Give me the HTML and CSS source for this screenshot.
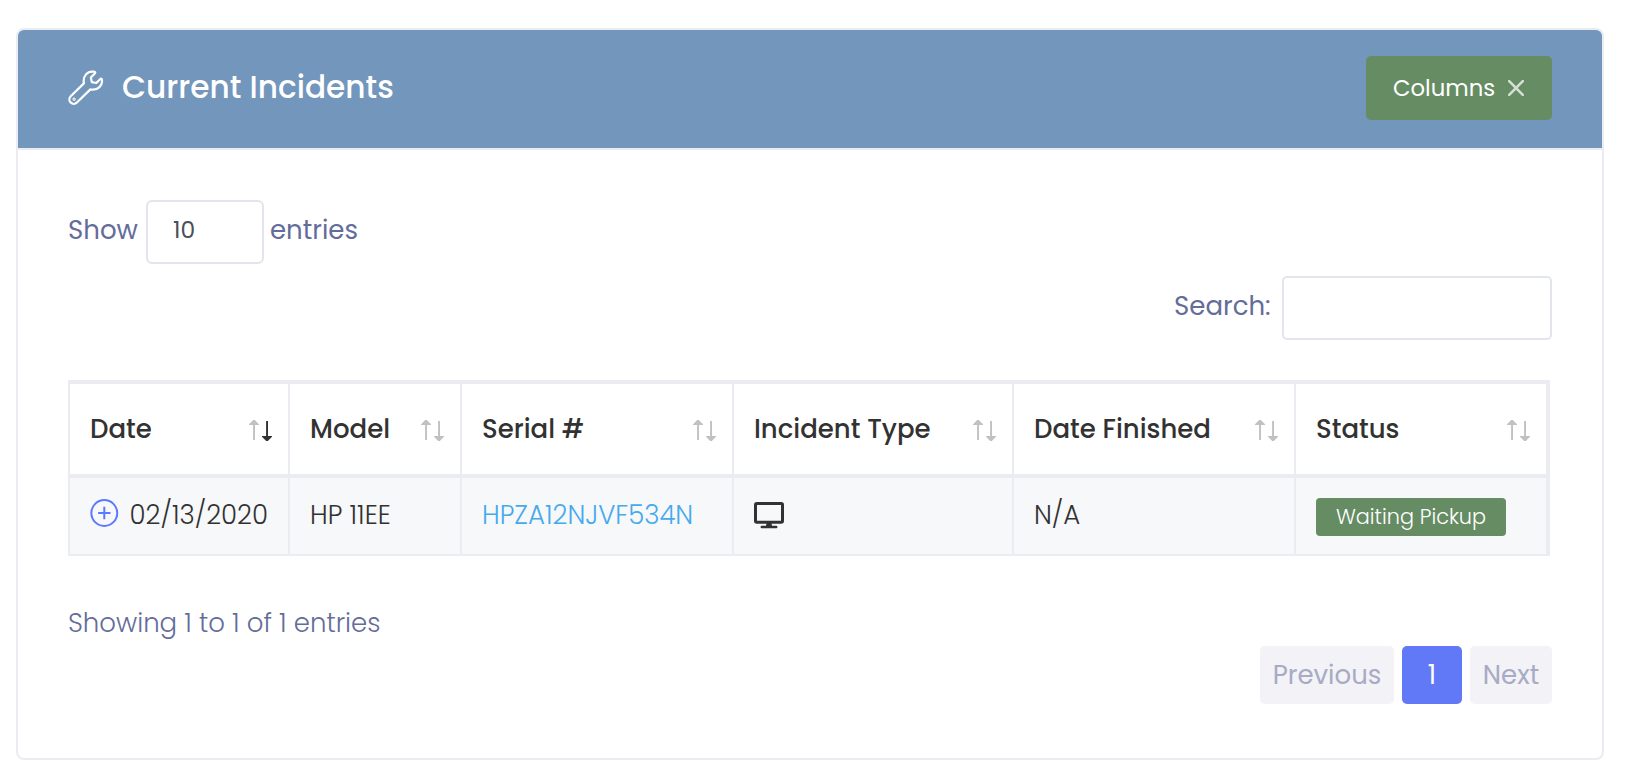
FILE: index.html
```html
<!DOCTYPE html>
<html lang="en">
<head>
<meta charset="utf-8">
<title>Current Incidents</title>
<link rel="stylesheet" href="styles.css">
</head>
<body>
<svg class="defs" aria-hidden="true">
  <symbol id="up" viewBox="0 0 10 20"><path d="M4.1 5H0v-.8L4.2 0h1.6L10 4.2V5H6v15H4.1z"/></symbol>
  <symbol id="down" viewBox="0 0 10 20"><path d="M4.1 0H6v15h4v.8L5.8 20H4.2L0 15.8V15h4.1z"/></symbol>
</svg>
<section class="card">
  <header class="card-header">
    <svg class="wrench" viewBox="0 0 36 36"><path d="M26 1.7C19.6 .6 14.5 6 15.9 13.4L2.7 26.3a4.35 4.35 0 0 0 6.2 6.2L22.4 19.4C29.9 20.9 35.2 15.2 33.8 9.2Q33.3 8 32.3 9L28.3 13L23.8 12.1L22.9 7.6L26.8 3.6Q28 2 26 1.7Z"/><circle cx="6.1" cy="29.2" r=".5"/></svg>
    <h1 class="title">Current Incidents</h1>
    <button class="columns-btn"><span>Columns</span><svg class="close" viewBox="0 0 16 16"><path d="M1.2 1.2l13.6 13.6M14.8 1.2L1.2 14.8"/></svg></button>
  </header>
  <div class="card-body">
    <div class="length"><span class="show">Show</span><span class="select">10</span><span>entries</span></div>
    <label class="search"><span class="search-label">Search:</span><input class="search-input" type="text"></label>
    <table class="incidents">
      <colgroup><col class="c-date"><col class="c-model"><col class="c-serial"><col class="c-type"><col class="c-finished"><col class="c-status"></colgroup>
      <thead><tr>
        <th><div class="head"><span>Date</span><span class="sort"><svg><use href="#up"/></svg><svg class="active"><use href="#down"/></svg></span></div></th>
        <th><div class="head"><span>Model</span><span class="sort"><svg><use href="#up"/></svg><svg><use href="#down"/></svg></span></div></th>
        <th><div class="head"><span>Serial #</span><span class="sort"><svg><use href="#up"/></svg><svg><use href="#down"/></svg></span></div></th>
        <th><div class="head"><span>Incident Type</span><span class="sort"><svg><use href="#up"/></svg><svg><use href="#down"/></svg></span></div></th>
        <th><div class="head"><span>Date Finished</span><span class="sort"><svg><use href="#up"/></svg><svg><use href="#down"/></svg></span></div></th>
        <th><div class="head"><span>Status</span><span class="sort"><svg><use href="#up"/></svg><svg><use href="#down"/></svg></span></div></th>
      </tr></thead>
      <tbody><tr>
        <td><div class="cell"><svg class="plus" viewBox="0 0 30 30"><circle cx="15" cy="15" r="13.6"/><path d="M8.5 15h13M15 8.5v13"/></svg><span>02/13/2020</span></div></td>
        <td><div class="cell"><span>HP 11EE</span></div></td>
        <td><div class="cell"><a class="serial">HPZA12NJVF534N</a></div></td>
        <td><div class="cell"><svg class="monitor" viewBox="0 0 30 27"><rect x="1.5" y="1.5" width="27" height="18.8" rx="1.3"/><path d="M12.7 20.5h4.6l.7 3.3h4.2a1.2 1.2 0 0 1 0 2.5H7.8a1.2 1.2 0 0 1 0-2.5H12z"/></svg></div></td>
        <td><div class="cell"><span>N/A</span></div></td>
        <td><div class="cell"><span class="badge">Waiting Pickup</span></div></td>
      </tr></tbody>
    </table>
    <div class="info">Showing 1 to 1 of 1 entries</div>
    <nav class="pages"><span class="page previous">Previous</span><span class="page current">1</span><span class="page next">Next</span></nav>
  </div>
</section>
</body>
</html>
```
FILE: styles.css
```css
* { box-sizing: border-box; }
body {
  margin: 0;
  padding: 28px 22px 0 16px;
  background: #fff;
  font-family: Poppins, Inter, "Open Sans", sans-serif;
  font-size: 26px;
  line-height: 38px;
  color: #323232;
}
.defs { position: absolute; width: 0; height: 0; }
.card {
  width: 1588px;
  height: 732px;
  border: 2px solid #ebecf1;
  border-radius: 8px;
  overflow: hidden;
}
.card-header {
  display: flex;
  align-items: center;
  height: 120px;
  padding: 0 50px;
  background: #7396bc;
  border-bottom: 2px solid #ebecf1;
}
.wrench {
  width: 36px;
  height: 36px;
  margin-top: -3px;
  fill: none;
  stroke: #fff;
  stroke-width: 2.2;
  stroke-linejoin: round;
}
.title {
  margin: -4px auto 0 18px;
  color: #fff;
  font-size: 31.2px;
  font-weight: 500;
}
.columns-btn {
  display: flex;
  align-items: center;
  width: 186px;
  height: 64px;
  margin-top: -2px;
  padding: 0 27px;
  border: 0;
  border-radius: 5px;
  background: #658c63;
  color: #fff;
  font: inherit;
  font-size: 22.75px;
}
.close {
  width: 16px;
  height: 16px;
  margin-left: auto;
  margin-right: 1px;
  stroke: #d3dfd2;
  stroke-width: 2.6;
  stroke-linecap: round;
}
.card-body {
  display: flex;
  flex-direction: column;
  padding: 50px 50px 0;
}
.length, .search {
  display: flex;
  height: 64px;
  line-height: 60px;
  color: #646c9a;
}
.show { width: 78px; }
.select {
  width: 118px;
  height: 64px;
  margin-right: 6px;
  padding-left: 25px;
  border: 2px solid #e2e5ec;
  border-radius: 6px;
  color: #495057;
  font-size: 23.4px;
  line-height: 56px;
}
.search { align-self: flex-end; margin-top: 12px; }
.search-label { width: 108px; }
.search-input {
  width: 270px;
  height: 64px;
  border: 2px solid #e2e5ec;
  border-radius: 5px;
  background: #fff;
}
.incidents {
  width: 1482px;
  margin-top: 40px;
  table-layout: fixed;
  border-collapse: separate;
  border-spacing: 0;
}
.c-date { width: 220px; }
.c-model { width: 172px; }
.c-serial { width: 272px; }
.c-type { width: 280px; }
.c-finished { width: 282px; }
.c-status { width: 256px; }
th, td { padding: 0; border-left: 2px solid #ebecf1; text-align: left; }
th:last-child, td:last-child { border-right: 4px solid #ebecf1; }
th { border-top: 4px solid #ebecf1; border-bottom: 4px solid #ebecf1; font-weight: 500; }
td { border-bottom: 2px solid #ebecf1; background: #f7f8fa; font-weight: 300; }
.head {
  display: flex;
  align-items: center;
  justify-content: space-between;
  height: 90px;
  padding: 0 16px 0 20px;
}
.sort { display: flex; gap: 3px; margin-top: 3px; }
.sort svg { width: 10px; height: 20px; fill: #c1c1c1; }
.sort svg + svg { margin-top: 1px; }
.sort .active { fill: #323232; }
.cell { display: flex; align-items: center; height: 76px; padding: 0 20px 2px; white-space: nowrap; }
.plus {
  width: 30px;
  height: 30px;
  margin: -4px 11px 0 0;
  fill: none;
  stroke: #5d78ff;
  stroke-width: 2.1;
}
.serial { color: #45aaec; }
.monitor { width: 30px; height: 27px; fill: #323232; }
.monitor rect { fill: none; stroke: #323232; stroke-width: 3; }
.badge {
  width: 190px;
  height: 38px;
  margin-top: 4px;
  border-radius: 4px;
  background: #658c63;
  color: #fff;
  font-size: 20.8px;
  text-align: center;
}
.info {
  margin-top: 48px;
  color: #646c9a;
  font-weight: 300;
}
.pages { display: flex; gap: 8px; align-self: flex-end; margin-top: 4px; }
.page {
  height: 58px;
  border-radius: 5px;
  background: #f2f2f7;
  color: #a7abc3;
  line-height: 58px;
  text-align: center;
}
.previous { width: 134px; }
.current { width: 60px; background: #6179f7; color: #fff; }
.next { width: 82px; }
```
